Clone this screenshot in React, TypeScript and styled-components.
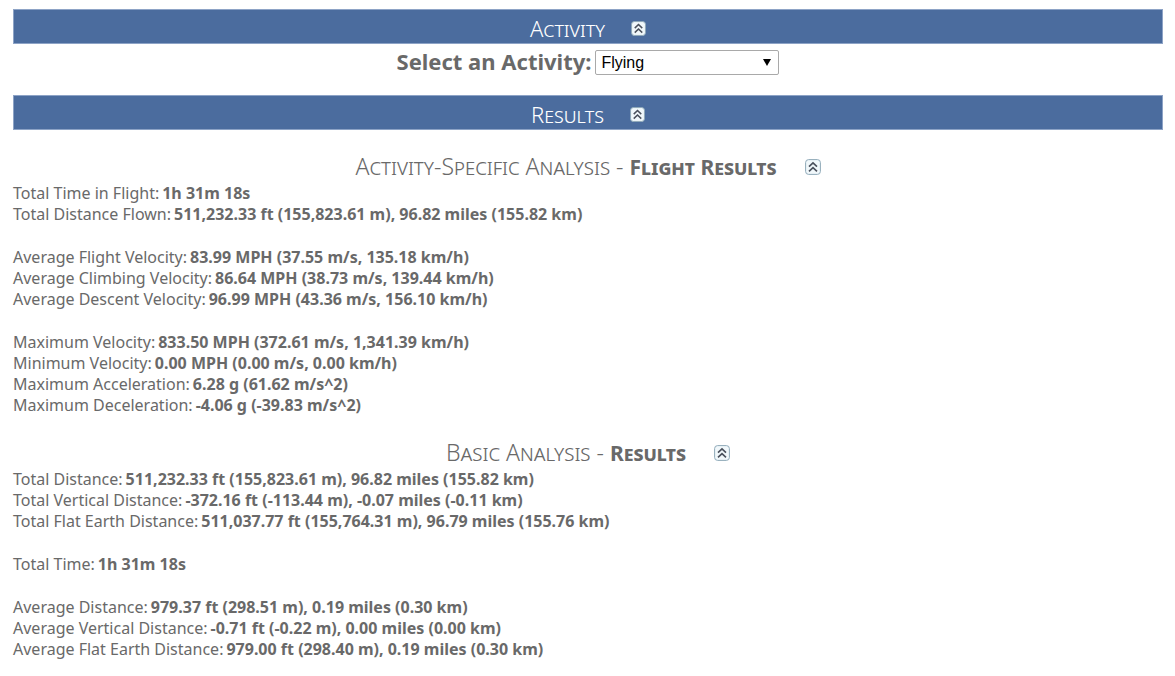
import React, { useState } from "react";
import styled, { createGlobalStyle } from "styled-components";

const GlobalStyle = createGlobalStyle`
  *, *::before, *::after { box-sizing: border-box; }
  body {
    margin: 0;
    background: #fff;
    color: #696969;
    font-family: "Noto Sans", "Open Sans", sans-serif;
    font-size: 16px;
    line-height: 21px;
  }
`;

const Page = styled.main`
  padding: 9px 12px 16px 13px;
`;

const Banner = styled.h2`
  display: flex;
  align-items: center;
  justify-content: center;
  gap: 26px;
  height: 35px;
  margin: 0;
  padding-top: 4px;
  border: 1px solid #8da3c6;
  background: #4b6c9e;
  color: #fff;
  font-size: 22px;
  font-weight: 300;
  line-height: 28px;
  font-variant: small-caps;

  > span { padding-bottom: 2px; }
`;

const Heading = styled.h3`
  display: flex;
  align-items: center;
  justify-content: center;
  gap: 28px;
  margin: 0;
  font-size: 23px;
  font-weight: 300;
  line-height: 32px;
  font-variant: small-caps;

  strong { font-size: 21px; font-weight: 700; }
`;

const Toggle = styled.button`
  display: flex;
  padding: 0;
  border: 0;
  background: none;
  cursor: pointer;
`;

const Picker = styled.div`
  display: flex;
  align-items: center;
  justify-content: center;
  gap: 4px;
  height: 51px;
  padding-bottom: 14px;
`;

const PickerLabel = styled.label`
  padding-bottom: 4px;
  font-size: 22px;
  font-weight: 700;
  line-height: 30px;
`;

const SelectBox = styled.span`
  display: grid;
  align-items: center;
  width: 184px;

  > * { grid-area: 1 / 1; }
  > svg { justify-self: end; margin-right: 8px; pointer-events: none; }
`;

const Select = styled.select`
  appearance: none;
  width: 100%;
  height: 25px;
  padding: 0 24px 0 5px;
  border: 1px solid #a9a9a9;
  border-radius: 2px;
  background: #fff;
  color: #000;
  font-family: "Liberation Sans", Arial, sans-serif;
  font-size: 16px;
`;

const Section = styled.section`
  padding-top: 20px;
`;

const Groups = styled.div`
  display: flex;
  flex-direction: column;
  gap: 22px;
`;

const Group = styled.dl`
  margin: 0;
`;

const Row = styled.div`
  display: flex;
  gap: 3px;

  dt, dd { margin: 0; }
  dd { font-weight: 700; }
`;

type ToggleProps = { size: number; open: boolean; name: string; onClick: () => void };

function CollapseToggle({ size, open, name, onClick }: ToggleProps) {
  return (
    <Toggle type="button" aria-expanded={open} aria-label={`Toggle ${name}`} onClick={onClick}>
      <svg width={size} height={size} viewBox="0 0 16 16" fill="none">
        <rect x="0.6" y="0.6" width="14.8" height="14.8" rx="3" fill="#f1f8fb" stroke="#8fa9b8" />
        <path d="M4 7.6 8 3.8l4 3.8M4 12.4 8 8.6l4 3.8" stroke="#4a505c" strokeWidth="1.6" />
      </svg>
    </Toggle>
  );
}

type Entry = [string, string];
type Analysis = { kind: string; title: string; groups: Entry[][] };

const analyses: Analysis[] = [
  {
    kind: "Activity-Specific Analysis",
    title: "Flight Results",
    groups: [
      [
        ["Total Time in Flight:", "1h 31m 18s"],
        ["Total Distance Flown:", "511,232.33 ft (155,823.61 m), 96.82 miles (155.82 km)"],
      ],
      [
        ["Average Flight Velocity:", "83.99 MPH (37.55 m/s, 135.18 km/h)"],
        ["Average Climbing Velocity:", "86.64 MPH (38.73 m/s, 139.44 km/h)"],
        ["Average Descent Velocity:", "96.99 MPH (43.36 m/s, 156.10 km/h)"],
      ],
      [
        ["Maximum Velocity:", "833.50 MPH (372.61 m/s, 1,341.39 km/h)"],
        ["Minimum Velocity:", "0.00 MPH (0.00 m/s, 0.00 km/h)"],
        ["Maximum Acceleration:", "6.28 g (61.62 m/s^2)"],
        ["Maximum Deceleration:", "-4.06 g (-39.83 m/s^2)"],
      ],
    ],
  },
  {
    kind: "Basic Analysis",
    title: "Results",
    groups: [
      [
        ["Total Distance:", "511,232.33 ft (155,823.61 m), 96.82 miles (155.82 km)"],
        ["Total Vertical Distance:", "-372.16 ft (-113.44 m), -0.07 miles (-0.11 km)"],
        ["Total Flat Earth Distance:", "511,037.77 ft (155,764.31 m), 96.79 miles (155.76 km)"],
      ],
      [["Total Time:", "1h 31m 18s"]],
      [
        ["Average Distance:", "979.37 ft (298.51 m), 0.19 miles (0.30 km)"],
        ["Average Vertical Distance:", "-0.71 ft (-0.22 m), 0.00 miles (0.00 km)"],
        ["Average Flat Earth Distance:", "979.00 ft (298.40 m), 0.19 miles (0.30 km)"],
      ],
    ],
  },
];

function AnalysisSection({ kind, title, groups }: Analysis) {
  const [open, setOpen] = useState(true);
  return (
    <Section>
      <Heading>
        <span>{kind} - <strong>{title}</strong></span>
        <CollapseToggle size={16} open={open} name={title} onClick={() => setOpen(!open)} />
      </Heading>
      {open && (
        <Groups>
          {groups.map((group) => (
            <Group key={group[0][0]}>
              {group.map(([label, value]) => (
                <Row key={label}>
                  <dt>{label}</dt>
                  <dd>{value}</dd>
                </Row>
              ))}
            </Group>
          ))}
        </Groups>
      )}
    </Section>
  );
}

export default function App() {
  const [activityOpen, setActivityOpen] = useState(true);
  const [resultsOpen, setResultsOpen] = useState(true);
  return (
    <Page>
      <GlobalStyle />
      <Banner>
        <span>Activity</span>
        <CollapseToggle size={15} open={activityOpen} name="Activity" onClick={() => setActivityOpen(!activityOpen)} />
      </Banner>
      {activityOpen && (
        <Picker>
          <PickerLabel htmlFor="activity">Select an Activity:</PickerLabel>
          <SelectBox>
            <Select id="activity" defaultValue="Flying">
              <option>Flying</option>
            </Select>
            <svg width="8" height="7" viewBox="0 0 8 7"><path d="M0 0h8L4 7z" fill="#000" /></svg>
          </SelectBox>
        </Picker>
      )}
      <Banner>
        <span>Results</span>
        <CollapseToggle size={15} open={resultsOpen} name="Results" onClick={() => setResultsOpen(!resultsOpen)} />
      </Banner>
      {resultsOpen && analyses.map((analysis) => <AnalysisSection key={analysis.kind} {...analysis} />)}
    </Page>
  );
}
